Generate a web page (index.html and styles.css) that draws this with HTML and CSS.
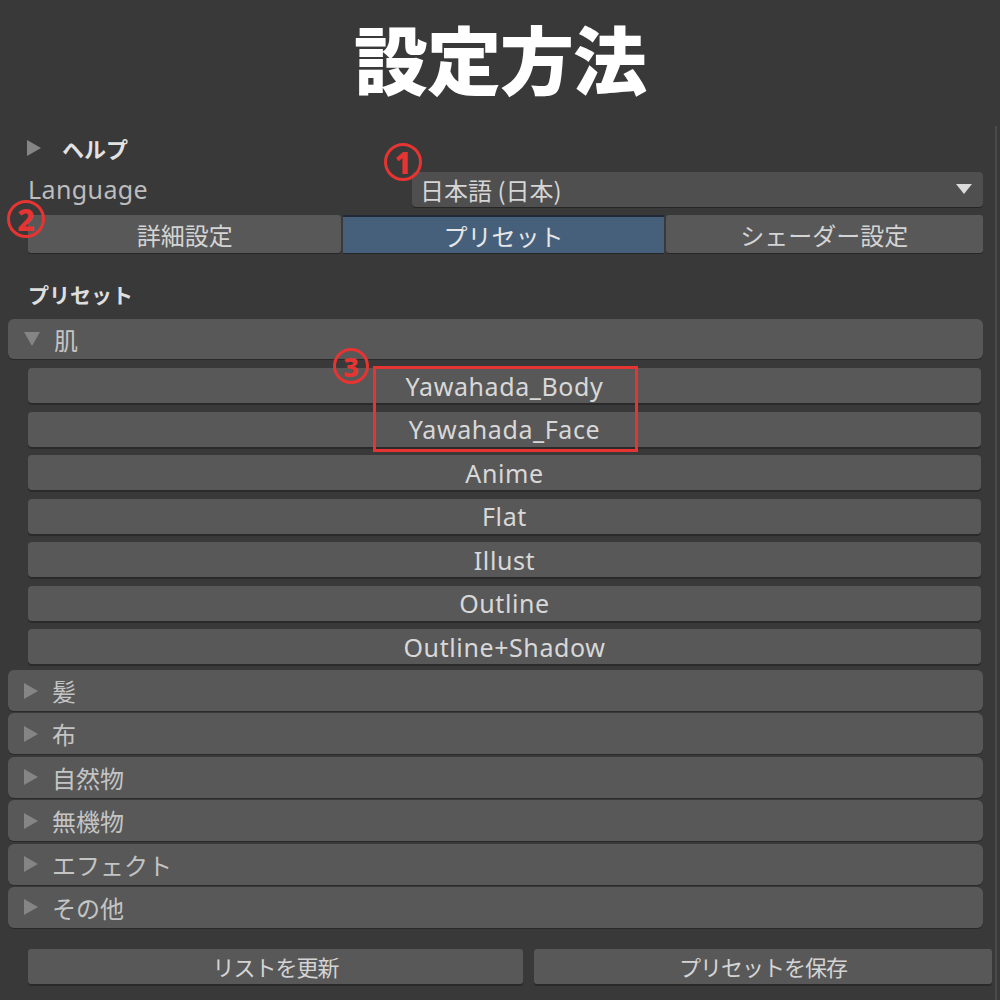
FILE: index.html
```html
<!DOCTYPE html>
<html lang="ja">
<head>
<meta charset="utf-8">
<title>設定方法</title>
<link rel="stylesheet" href="styles.css">
</head>
<body>
<h1 class="title">設定方法</h1>

<div class="panel">
  <div class="content">
    <div class="help-row">
      <span class="tri tri-right"></span>
      <span class="help-label">ヘルプ</span>
    </div>

    <div class="lang-row">
      <span class="lang-label">Language</span>
      <div class="dropdown">
        <span>日本語 (日本)</span>
        <span class="drop-arrow"></span>
      </div>
      <span class="mark mark-1">1</span>
    </div>

    <div class="tabs">
      <div class="tab tab-detail">詳細設定</div>
      <div class="tab tab-active">プリセット</div>
      <div class="tab tab-shader">シェーダー設定</div>
      <span class="mark mark-2">2</span>
    </div>

    <div class="section-title">プリセット</div>

    <div class="fold fold-open">
      <span class="tri tri-down"></span>
      <span class="fold-label">肌</span>
    </div>

    <div class="preset-list">
      <div class="preset">Yawahada_Body</div>
      <div class="preset">Yawahada_Face</div>
      <div class="preset">Anime</div>
      <div class="preset">Flat</div>
      <div class="preset">Illust</div>
      <div class="preset">Outline</div>
      <div class="preset">Outline+Shadow</div>
      <span class="mark mark-3">3</span>
      <span class="highlight"></span>
    </div>

    <div class="fold-list">
      <div class="fold"><span class="tri tri-right"></span><span class="fold-label">髪</span></div>
      <div class="fold"><span class="tri tri-right"></span><span class="fold-label">布</span></div>
      <div class="fold"><span class="tri tri-right"></span><span class="fold-label">自然物</span></div>
      <div class="fold"><span class="tri tri-right"></span><span class="fold-label">無機物</span></div>
      <div class="fold"><span class="tri tri-right"></span><span class="fold-label">エフェクト</span></div>
      <div class="fold"><span class="tri tri-right"></span><span class="fold-label">その他</span></div>
    </div>

    <div class="actions">
      <div class="action action-refresh">リストを更新</div>
      <div class="action action-save">プリセットを保存</div>
    </div>
  </div>
  <div class="scrollbar"></div>
</div>
</body>
</html>
```

FILE: styles.css
```css
* { box-sizing: border-box; }

html, body {
  margin: 0;
  padding: 0;
  background: #393939;
  height: 1000px;
  overflow: hidden;
}

body {
  font-family: "Noto Sans", "Noto Sans CJK JP", sans-serif;
  color: #d2d2d2;
}

.title {
  margin: 0;
  height: 126px;
  padding-top: 9px;
  text-align: center;
  font-family: "Noto Sans CJK JP", sans-serif;
  font-weight: 900;
  font-size: 74px;
  line-height: 96px;
  color: #ffffff;
  letter-spacing: -1px;
}

.panel {
  display: flex;
  height: 874px;
}

.content {
  flex: 1;
  padding-left: 8px;
  padding-right: 3px;
  display: flex;
  flex-direction: column;
}

.scrollbar {
  width: 2px;
  background: #4a4a4a;
  margin-right: 3px;
}

/* triangles used by foldouts */
.tri {
  display: inline-block;
  width: 0;
  height: 0;
  flex: none;
}
.tri-right {
  border-top: 8px solid transparent;
  border-bottom: 8px solid transparent;
  border-left: 14px solid #858585;
}
.tri-down {
  border-left: 8px solid transparent;
  border-right: 8px solid transparent;
  border-top: 14px solid #858585;
}

.help-row {
  display: flex;
  align-items: center;
  height: 44px;
  padding-left: 19px;
}
.help-label {
  margin-left: 21px;
  font-family: "Noto Sans CJK JP", sans-serif;
  font-weight: 700;
  font-size: 22px;
  color: #e2e2e2;
}

.lang-row {
  position: relative;
  display: flex;
  align-items: center;
  height: 38px;
  padding-left: 20px;
  padding-right: 9px;
  margin-bottom: 3px;
}
.lang-label {
  width: 384px;
  font-size: 25px;
  letter-spacing: 0.4px;
  color: #bdbdbd;
}
.dropdown {
  flex: 1;
  height: 35px;
  background: #4f4f4f;
  border-radius: 4px;
  box-shadow: 0 1px 0 #262626;
  display: flex;
  align-items: center;
  justify-content: space-between;
  padding: 0 11px 0 8px;
  font-family: "Noto Sans CJK JP", sans-serif;
  font-size: 24px;
  color: #d6d6d6;
}
.drop-arrow {
  width: 0;
  height: 0;
  border-left: 8px solid transparent;
  border-right: 8px solid transparent;
  border-top: 10px solid #dcdcdc;
}

.tabs {
  position: relative;
  display: flex;
  height: 38px;
  margin-top: 4px;
  margin-left: 20px;
  margin-right: 9px;
  gap: 2px;
}
.tab {
  background: #585858;
  border-radius: 3px;
  box-shadow: 0 1px 0 #262626;
  display: flex;
  align-items: center;
  justify-content: center;
  font-family: "Noto Sans CJK JP", sans-serif;
  font-size: 24px;
  color: #d4d4d4;
}
.tab-detail { flex: 313 1 0; }
.tab-active {
  flex: 320 1 0;
  background: #46607c;
  border-top: 2px solid #1f2a36;
  border-radius: 0;
  color: #e6e6e6;
}
.tab-shader { flex: 317 1 0; }

.section-title {
  height: 66px;
  padding-top: 26px;
  padding-left: 20px;
  font-family: "Noto Sans CJK JP", sans-serif;
  font-weight: 700;
  font-size: 21px;
  line-height: 30px;
  color: #dedede;
}

.fold {
  display: flex;
  align-items: center;
  height: 41px;
  margin-right: 9px;
  background: #585858;
  border-radius: 6px;
  box-shadow: 0 1px 0 #2a2a2a;
  padding-left: 16px;
}
.fold-open {
  height: 40px;
}
.fold-label {
  margin-left: 14px;
  font-family: "Noto Sans CJK JP", sans-serif;
  font-size: 24px;
  color: #c4c4c4;
}

.preset-list {
  position: relative;
  display: flex;
  flex-direction: column;
  gap: 8.5px;
  margin: 9px 11px 6px 20px;
}
.preset {
  height: 35px;
  background: #585858;
  border-radius: 4px;
  box-shadow: 0 2px 0 #2a2a2a;
  display: flex;
  align-items: center;
  justify-content: center;
  font-size: 25px;
  letter-spacing: 0.6px;
  color: #d8d8d8;
}

.fold-list {
  display: flex;
  flex-direction: column;
  gap: 2.4px;
}

.actions {
  display: flex;
  gap: 11px;
  margin-top: 21px;
  margin-left: 20px;
}
.action {
  height: 35px;
  background: #585858;
  border-radius: 3px;
  box-shadow: 0 2px 0 #2a2a2a;
  display: flex;
  align-items: center;
  justify-content: center;
  font-family: "Noto Sans CJK JP", sans-serif;
  font-size: 22px;
  color: #d4d4d4;
  letter-spacing: -1px;
}
.action-refresh { flex: 495 1 0; }
.action-save { flex: 458 1 0; }

/* red callouts drawn over the panel */
.mark {
  position: absolute;
  width: 38px;
  height: 38px;
  border: 3.5px solid #e53431;
  border-radius: 50%;
  color: #e53431;
  font-family: "Noto Sans", sans-serif;
  font-weight: 800;
  font-size: 30px;
  display: flex;
  align-items: center;
  justify-content: center;
  line-height: 1;
  padding-top: 1px;
}
.mark-1 { left: 376px; top: -27px; }
.mark-2 { left: -21px; top: -15px; }
.mark-3 { left: 305px; top: -20px; width: 36px; height: 36px; font-size: 27px; }

.highlight {
  position: absolute;
  left: 345px;
  top: -2px;
  width: 265px;
  height: 86px;
  border: 3px solid #e53431;
}
```
